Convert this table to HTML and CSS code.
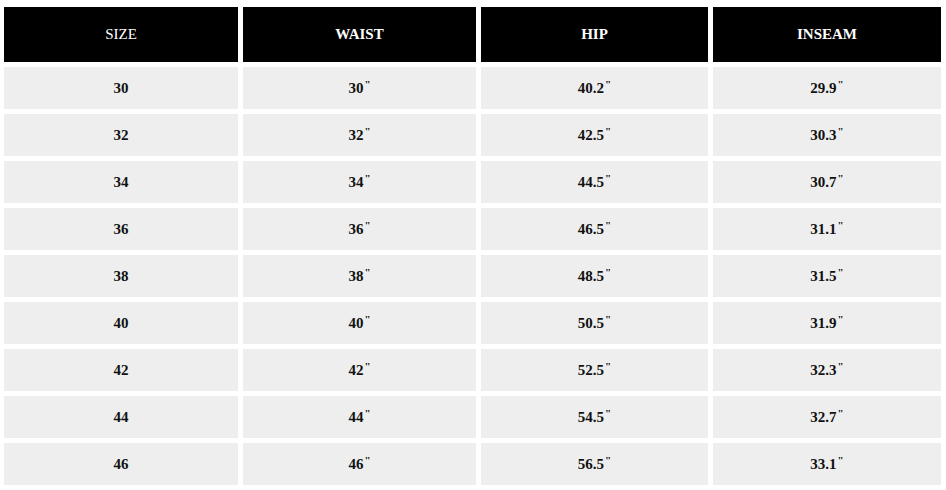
FILE: index.html
```html
<!DOCTYPE html>
<html>
<head>
<meta charset="utf-8">
<link rel="stylesheet" href="styles.css">
</head>
<body>
<div class="chart">
  <div class="cell head">SIZE</div><div class="cell head">WAIST</div><div class="cell head">HIP</div><div class="cell head">INSEAM</div>
  <div class="cell">30</div><div class="cell">30<span class="in">"</span></div><div class="cell">40.2<span class="in">"</span></div><div class="cell">29.9<span class="in">"</span></div>
  <div class="cell">32</div><div class="cell">32<span class="in">"</span></div><div class="cell">42.5<span class="in">"</span></div><div class="cell">30.3<span class="in">"</span></div>
  <div class="cell">34</div><div class="cell">34<span class="in">"</span></div><div class="cell">44.5<span class="in">"</span></div><div class="cell">30.7<span class="in">"</span></div>
  <div class="cell">36</div><div class="cell">36<span class="in">"</span></div><div class="cell">46.5<span class="in">"</span></div><div class="cell">31.1<span class="in">"</span></div>
  <div class="cell">38</div><div class="cell">38<span class="in">"</span></div><div class="cell">48.5<span class="in">"</span></div><div class="cell">31.5<span class="in">"</span></div>
  <div class="cell">40</div><div class="cell">40<span class="in">"</span></div><div class="cell">50.5<span class="in">"</span></div><div class="cell">31.9<span class="in">"</span></div>
  <div class="cell">42</div><div class="cell">42<span class="in">"</span></div><div class="cell">52.5<span class="in">"</span></div><div class="cell">32.3<span class="in">"</span></div>
  <div class="cell">44</div><div class="cell">44<span class="in">"</span></div><div class="cell">54.5<span class="in">"</span></div><div class="cell">32.7<span class="in">"</span></div>
  <div class="cell">46</div><div class="cell">46<span class="in">"</span></div><div class="cell">56.5<span class="in">"</span></div><div class="cell">33.1<span class="in">"</span></div>
</div>
</body>
</html>
```
FILE: styles.css
```css
html, body {
  margin: 0;
  padding: 0;
  background: #ffffff;
}
body {
  padding: 7px 0 0 4px;
  font-family: "Liberation Serif", "DejaVu Serif", serif;
}
.chart {
  display: grid;
  grid-template-columns: 234px 233px 227px 228px;
  grid-template-rows: 55px repeat(9, 42px);
  gap: 5px;
}
.cell {
  display: flex;
  align-items: center;
  justify-content: center;
  background: #eeeeee;
  color: #111111;
  font-size: 15px;
  font-weight: bold;
}
.in {
  font-size: 11px;
  align-self: flex-start;
  margin-top: 11px;
  margin-left: 1px;
}
.head {
  background: #000000;
  color: #ffffff;
  font-weight: normal;
  font-size: 15px;
}
.head:nth-child(n+2) {
  font-weight: bold;
}
```
